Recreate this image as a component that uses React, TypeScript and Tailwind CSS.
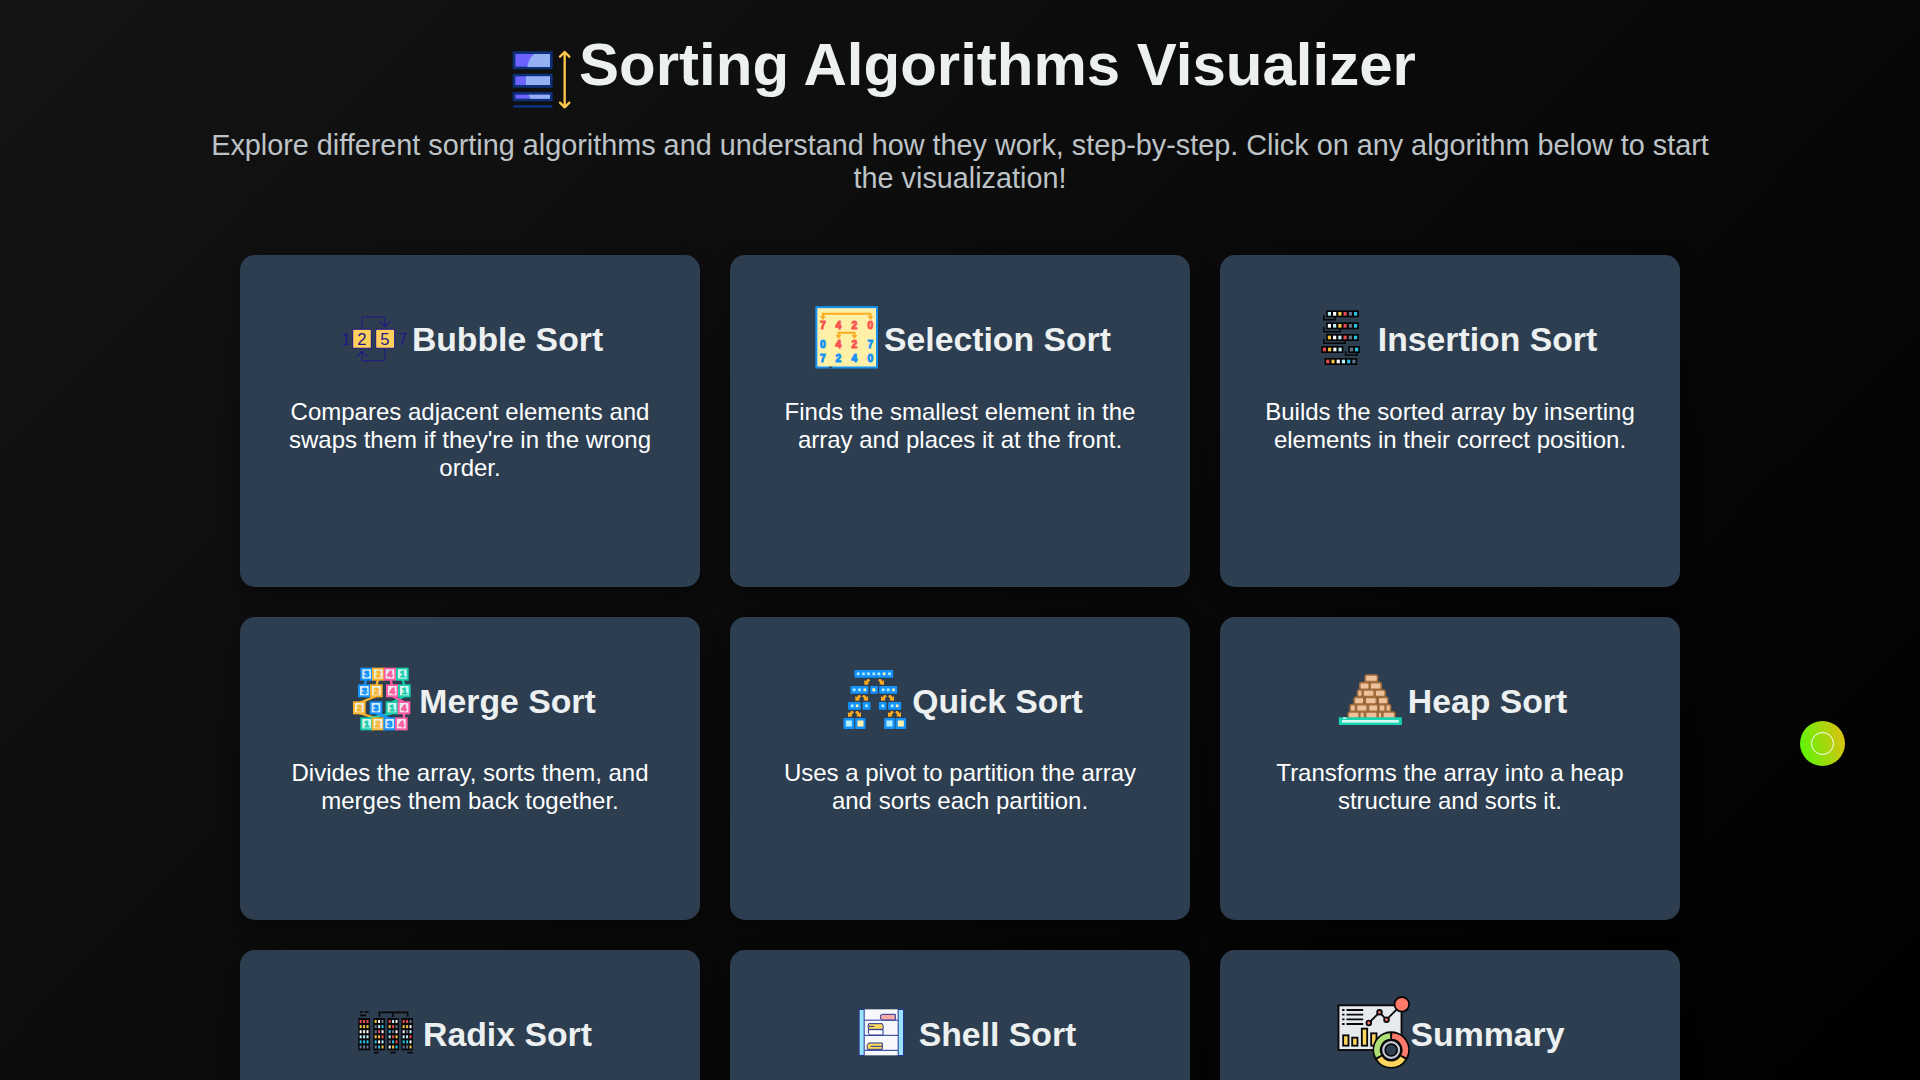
import type { ReactNode } from "react";

function Art({ box, children }: { box: string; children: ReactNode }) {
  return (
    <svg viewBox={box} className="h-[75px] w-[75px] shrink-0 font-normal" aria-hidden="true">
      {children}
    </svg>
  );
}

const digit = { fontFamily: "Liberation Sans", textAnchor: "middle" as const };

function LogoIcon() {
  const rows = [
    { y: 64, h: 54, split: "M82 111 Q86 86 102 72 H150 V111 Z" },
    { y: 131, h: 42, split: "M78 139 H150 V165 H78 Z" },
    { y: 186, h: 28, split: "M86 194 H150 V206 H91 Z" },
  ];
  return (
    <Art box="12 36 225 225">
      {rows.map((r) => (
        <g key={r.y}>
          <rect x="38" y={r.y} width="120" height={r.h} rx="3" fill="#0d2f78" />
          <rect x="46" y={r.y + 8} width="104" height={r.h - 16} fill="#6c63ff" />
          <path d={r.split} fill="#94b1f3" />
        </g>
      ))}
      <rect x="39" y="225" width="119" height="8" rx="4" fill="#0d2f78" />
      <path d="M194 66 V232 M180 80 L194 66 L208 80 M180 218 L194 232 L208 218" fill="none" stroke="#ffc84d" strokeWidth="7" strokeLinecap="round" strokeLinejoin="round" />
    </Art>
  );
}

function BubbleIcon() {
  return (
    <Art box="5 0 225 225">
      <g fill="none" stroke="#22178a" strokeWidth="3.2" strokeLinecap="round" strokeLinejoin="round">
        <path d="M80 87 V55 Q80 51 84 51 H145 Q149 51 149 55 V80 M134 65 L149 80 L164 65" />
        <path d="M149 147 V178 Q149 182 145 182 H84 Q80 182 80 178 V156 M65 169 L80 154 L95 169" />
        <rect x="52" y="88" width="56" height="57" rx="3" fill="#ffd05b" />
        <rect x="121" y="88" width="57" height="57" rx="3" fill="#ffd05b" />
      </g>
      <g fill="#22178a" fontSize="50" {...digit}>
        <text x="32" y="135" fontSize="47">1</text>
        <text x="80" y="135">2</text>
        <text x="149" y="135">5</text>
        <text x="203" y="135">7</text>
      </g>
    </Art>
  );
}

function SelectionIcon() {
  const xs = [56, 103, 151, 199];
  const rows = [
    { y: 101, t: "7420", c: ["#f9544f", "#f9544f", "#f9544f", "#f9544f"] },
    { y: 159, t: "0427", c: ["#1593f5", "#f9544f", "#f9544f", "#1593f5"] },
    { y: 202, t: "7240", c: ["#1593f5", "#1593f5", "#1593f5", "#1593f5"] },
  ];
  return (
    <Art box="14.500 15 225 225">
      <rect x="36.500" y="36.500" width="182" height="181" fill="#fff0a8" stroke="#1593f5" strokeWidth="6" />
      <path d="M56 66 V56 H199 V66 M103 123 V113 H151 V123" fill="none" stroke="#fbab20" strokeWidth="6" />
      <path d="M47 63 H65 L56 75 Z M190 63 H208 L199 75 Z M94 120 H112 L103 132 Z M142 120 H160 L151 132 Z" fill="#fbab20" />
      {rows.map((r) =>
        xs.map((x, i) => (
          <text key={`${r.y}-${x}`} x={x} y={r.y} fontSize="31" fontWeight="700" fill={r.c[i]} stroke={r.c[i]} strokeWidth="3" {...digit}>
            {r.t[i]}
          </text>
        )),
      )}
      <rect x="74" y="215" width="10" height="5" fill="#34434f" />
    </Art>
  );
}

const chip: Record<string, string> = {
  a: "#b9eff9",
  w: "#ffffff",
  y: "#f5c542",
  r: "#e94b54",
  g: "#65758e",
  c: "#25c3e6",
};

function ChipRow({ x, y, colors }: { x: number; y: number; colors: string }) {
  return (
    <g>
      <rect x={x} y={y} width={colors.length * 15.7 + 4} height="21" fill="#050506" />
      {colors.split("").map((c, i) => (
        <rect key={i} x={x + 5 + i * 15.7} y={y + 5} width="9.500" height="11" fill={chip[c]} />
      ))}
    </g>
  );
}

function InsertionIcon() {
  return (
    <Art box="-21.500 0 225 225">
      <ChipRow x={48} y={31} colors="awyrgc" />
      <ChipRow x={48} y={67} colors="wayrgc" />
      <ChipRow x={48} y={102} colors="ywargc" />
      <ChipRow x={33} y={138} colors="rywa" />
      <ChipRow x={114} y={138} colors="gc" />
      <ChipRow x={43} y={174} colors="rywacg" />
      <path d="M41 45 V59 H75 V51 M41 81 V95 H90 V88 M41 117 V130 H105 V122 M106 153 V165 H141 V158" fill="none" stroke="#050506" strokeWidth="4.500" />
    </Art>
  );
}

function MergeIcon() {
  const blue = "#1593ff";
  const gold = "#fbb42b";
  const pink = "#ff5ea4";
  const mint = "#18cfac";
  const cells: [number, number, string, string][] = [
    [67, 48, "3", blue], [102, 48, "2", gold], [137, 48, "4", pink], [174, 48, "1", mint],
    [60, 98, "3", blue], [96, 98, "2", gold], [144, 98, "4", pink], [180, 98, "1", mint],
    [45, 149, "2", gold], [95, 149, "3", blue], [143, 149, "1", mint], [179, 149, "4", pink],
    [67, 197, "1", mint], [101, 197, "2", gold], [136, 197, "3", blue], [171, 197, "4", pink],
  ];
  return (
    <Art box="-1 12 225 225">
      <g fill="none" strokeWidth="7">
        <path d="M67 60 L60 84" stroke={blue} />
        <path d="M102 60 L96 84" stroke={gold} />
        <path d="M137 60 L144 84" stroke={pink} />
        <path d="M174 60 L180 84" stroke={mint} />
        <path d="M96 114 L48 134 M45 165 L96 181" stroke={gold} />
        <path d="M180 114 L145 133 M143 166 L73 181" stroke={mint} />
        <path d="M144 114 L179 133 M179 165 V181" stroke={pink} />
        <path d="M95 165 L136 181" stroke={blue} />
      </g>
      {cells.map(([x, y, n, c], i) => (
        <g key={i}>
          <rect x={x - 19} y={y - 19} width="38" height="39" fill={c} />
          <rect x={x - 13} y={y - 14} width="26" height="28" fill="#e9f7f7" fillOpacity=".9" />
          <text x={x} y={y + 10} fontSize="29" fontWeight="700" fill={c} stroke={c} strokeWidth="2.500" {...digit}>
            {n}
          </text>
        </g>
      ))}
    </Art>
  );
}

function QuickIcon() {
  const groups: { x: number; y: number; w: number; h: number; dots: [number, number][]; s: number }[] = [
    { x: 60, y: 36, w: 116, h: 23, s: 8, dots: [[71, 0], [87, 0], [102, 0], [118, 0], [133, 0], [149, 1], [165, 0]] },
    { x: 48, y: 84, w: 54, h: 23, s: 8, dots: [[59, 0], [75, 0], [91, 1]] },
    { x: 107, y: 84, w: 23, h: 23, s: 9, dots: [[118, 1]] },
    { x: 134, y: 84, w: 54, h: 23, s: 8, dots: [[146, 0], [161, 0], [177, 1]] },
    { x: 41, y: 132, w: 38, h: 23, s: 8, dots: [[53, 0], [68, 1]] },
    { x: 84, y: 132, w: 24, h: 23, s: 8, dots: [[96, 0]] },
    { x: 133, y: 132, w: 23, h: 23, s: 8, dots: [[145, 0]] },
    { x: 161, y: 132, w: 39, h: 23, s: 8, dots: [[173, 0], [188, 1]] },
    { x: 27, y: 180, w: 32, h: 33, s: 18, dots: [[43, 0]] },
    { x: 62, y: 180, w: 31, h: 33, s: 18, dots: [[78, 1]] },
    { x: 149, y: 180, w: 32, h: 33, s: 18, dots: [[165, 0]] },
    { x: 183, y: 180, w: 32, h: 33, s: 18, dots: [[199, 1]] },
  ];
  const arrows: [number, number, number][] = [
    [97, 72, 1], [141, 72, -1],
    [70, 120, 1], [93, 120, -1], [147, 120, 1], [171, 120, -1],
    [48, 168, 1], [72, 168, -1], [168, 168, 1], [192, 168, -1],
  ];
  return (
    <Art box="7.5 12 225 225">
      {groups.map((g, i) => (
        <g key={i}>
          <rect x={g.x} y={g.y} width={g.w} height={g.h} rx="2" fill="#1593ff" />
          {g.dots.map(([x, warm]) => (
            <rect key={x} x={x - g.s / 2} y={g.y + g.h / 2 - g.s / 2} width={g.s} height={g.s} fill={warm ? "#fff1a8" : "#b0efff"} />
          ))}
        </g>
      ))}
      {arrows.map(([x, y, d], i) => (
        <path key={i} transform={`translate(${x} ${y}) scale(${d} 1)`} d="M7 -9 L10 -4 L4 1 L6 7 L-7 9 L-8 -6 L-3 -2 L1 -8 Z" fill="#fbab20" />
      ))}
    </Art>
  );
}

function HeapIcon() {
  const bricks: [number, number, number][] = [
    [106, 45, 37],
    [90, 68, 28], [121, 68, 33],
    [83, 90, 14], [100, 90, 33], [136, 90, 30],
    [73, 112, 29], [106, 112, 34], [145, 112, 29],
    [61, 134, 16], [80, 134, 32], [116, 134, 28], [147, 134, 19], [168, 134, 14],
    [55, 156, 33], [90, 156, 14], [107, 156, 35], [145, 156, 11], [159, 156, 36],
  ];
  return (
    <Art box="9.5 6 225 225">
      {bricks.map(([x, y, w], i) => (
        <rect key={i} x={x} y={y} width={w} height="20" rx="5" fill="#edc19b" stroke="#a36d3d" strokeWidth="5" />
      ))}
      <rect x="27" y="172" width="189" height="23" fill="#16d6b2" />
      <rect x="36" y="180" width="171" height="8" fill="#d5fff3" />
      <rect x="40" y="172" width="10" height="5" fill="#d5fff3" />
    </Art>
  );
}

function RadixIcon() {
  const cols: { x: number; rows: string[] }[] = [
    { x: 28, rows: ["rrr", "yyy", "www", "aaa", "ccc", "ggg"] },
    { x: 73, rows: ["ywg", "gac", "grw", "yyr", "cwa", "gcy"] },
    { x: 115, rows: ["raw", "yrg", "cgw", "ary", "gcr", "wyc"] },
    { x: 157, rows: ["rrg", "yyw", "wga", "aar", "ccw", "ggy"] },
  ];
  return (
    <Art box="-3 -15 225 225">
      {cols.map((c) => (
        <g key={c.x}>
          <rect x={c.x} y="54" width="35" height="97" fill="#08080a" />
          {c.rows.map((r, j) =>
            r.split("").map((k, i) => <rect key={`${j}${i}`} x={c.x + 4 + i * 10.3} y={60 + j * 15.3} width="6" height="9" fill={chip[k]} />),
          )}
        </g>
      ))}
      <path d="M91 50 V37 H176 V50 M132 37 V50 M33 36 H42 M46 36 H59 M33 46 H51 M75 158 H89 M124 158 H140 M175 158 H191" fill="none" stroke="#08080a" strokeWidth="5" />
    </Art>
  );
}

function ShellIcon() {
  return (
    <Art box="-2 0 225 225">
      <rect x="43" y="43" width="133" height="138" fill="#f7f8fd" />
      <g stroke="#26348f" strokeWidth="3" fill="none">
        <path d="M59 75.500 H160 M59 121 H160 M59 166 H160" />
        <rect x="43.500" y="43.500" width="15" height="138" fill="#98e5fb" />
        <rect x="160.500" y="43.500" width="16" height="138" fill="#98e5fb" />
        <path d="M152 58 H114 Q107 58 107 65 Q107 75 114 75 H152 Z" fill="#faaaa5" />
        <path d="M71 104 H115 V120 H75 Q70 118 71 104 Z" fill="#ffffff" />
        <path d="M72 86 H113 Q117 92 115 103 H72 Q68 95 72 86 Z" fill="#ffd95c" />
        <path d="M72 94 H89" />
        <path d="M113 144 H72 Q65 150 68 163 H113 Z" fill="#ffd95c" />
        <path d="M78 154 H113" />
      </g>
    </Art>
  );
}

function SummaryIcon() {
  return (
    <Art box="32.500 30 225 225">
      <g stroke="#08080a" strokeWidth="5.500" fill="none">
        <rect x="40" y="61" width="189" height="134" fill="#e6e9ee" />
        <path d="M51 75 H58 M64 75 H114 M51 89 H58 M64 89 H114 M51 103 H58 M64 103 H114 M51 117 H58 M64 117 H114" />
        <path d="M131 114 L163 82 L184 104 L226 62" />
        <circle cx="131" cy="114" r="7" fill="#ff7a6b" />
        <circle cx="163" cy="82" r="7" fill="#ff7a6b" />
        <circle cx="184" cy="104" r="7" fill="#ff7a6b" />
        <circle cx="230" cy="58" r="22" fill="#ff7a6b" />
        <rect x="54" y="151" width="16" height="31" fill="#ffd75e" />
        <rect x="81" y="158" width="16" height="24" fill="#ffd75e" />
        <rect x="110" y="131" width="16" height="51" fill="#ffd75e" />
        <rect x="138" y="145" width="16" height="37" fill="#ffd75e" />
      </g>
      <circle cx="198" cy="195" r="56" fill="#08080a" />
      <g fill="none" strokeWidth="17">
        <path d="M201 153 A42 42 0 0 1 236 214" stroke="#ff7a6b" />
        <path d="M233 219 A42 42 0 0 1 163 219" stroke="#ffd75e" />
        <path d="M160 214 A42 42 0 0 1 195 153" stroke="#aee075" />
      </g>
      <circle cx="198" cy="195" r="32" fill="#08080a" />
      <circle cx="198" cy="195" r="23" fill="#2c3e50" stroke="#c5cad8" strokeWidth="8" />
      <circle cx="198" cy="195" r="18" fill="#2c3e50" stroke="#08080a" strokeWidth="5" />
    </Art>
  );
}

const algorithms = [
  { title: "Bubble Sort", icon: <BubbleIcon />, text: "Compares adjacent elements and swaps them if they're in the wrong order." },
  { title: "Selection Sort", icon: <SelectionIcon />, text: "Finds the smallest element in the array and places it at the front." },
  { title: "Insertion Sort", icon: <InsertionIcon />, text: "Builds the sorted array by inserting elements in their correct position." },
  { title: "Merge Sort", icon: <MergeIcon />, text: "Divides the array, sorts them, and merges them back together." },
  { title: "Quick Sort", icon: <QuickIcon />, text: "Uses a pivot to partition the array and sorts each partition." },
  { title: "Heap Sort", icon: <HeapIcon />, text: "Transforms the array into a heap structure and sorts it." },
  { title: "Radix Sort", icon: <RadixIcon /> },
  { title: "Shell Sort", icon: <ShellIcon /> },
  { title: "Summary", icon: <SummaryIcon /> },
];

export default function App() {
  return (
    <div className="h-screen overflow-hidden bg-[linear-gradient(135deg,#141414,#000000)] font-['Liberation_Sans',Arial,sans-serif] text-[#ecf0f1]">
      <header className="flex flex-col items-center pt-[30px]">
        <h1 className="flex h-[87px] items-end justify-center text-[60px] leading-[69px] font-bold">
          <LogoIcon />
          <span className="pb-[18px]">Sorting Algorithms Visualizer</span>
        </h1>
        <p className="mt-3 w-[1500px] text-center text-[28.8px] leading-[33px] text-[#bdc3c7]">
          Explore different sorting algorithms and understand how they work, step-by-step. Click on any algorithm below to start the visualization!
        </p>
      </header>
      <main className="mx-auto mt-[60px] grid w-[1440px] grid-cols-3 gap-[30px]">
        {algorithms.map((a) => (
          <section key={a.title} className="rounded-[15px] bg-[#2c3e50] px-[45px] pt-[45px] pb-[105px] text-center shadow-[0_8px_20px_rgba(0,0,0,0.4)]">
            <h2 className="flex h-[75px] items-center justify-center text-[33.75px] leading-[39px] font-bold">
              {a.icon}
              <span className="pt-1">{a.title}</span>
            </h2>
            {a.text && <p className="mt-[22.6px] text-2xl leading-7 text-white">{a.text}</p>}
          </section>
        ))}
      </main>
      <div className="fixed top-[721px] left-[1800px] flex size-[45px] items-center justify-center rounded-full bg-[linear-gradient(75deg,#50fa05,#e8bd12)]">
        <div className="size-[23px] rounded-full border border-white" />
      </div>
    </div>
  );
}
